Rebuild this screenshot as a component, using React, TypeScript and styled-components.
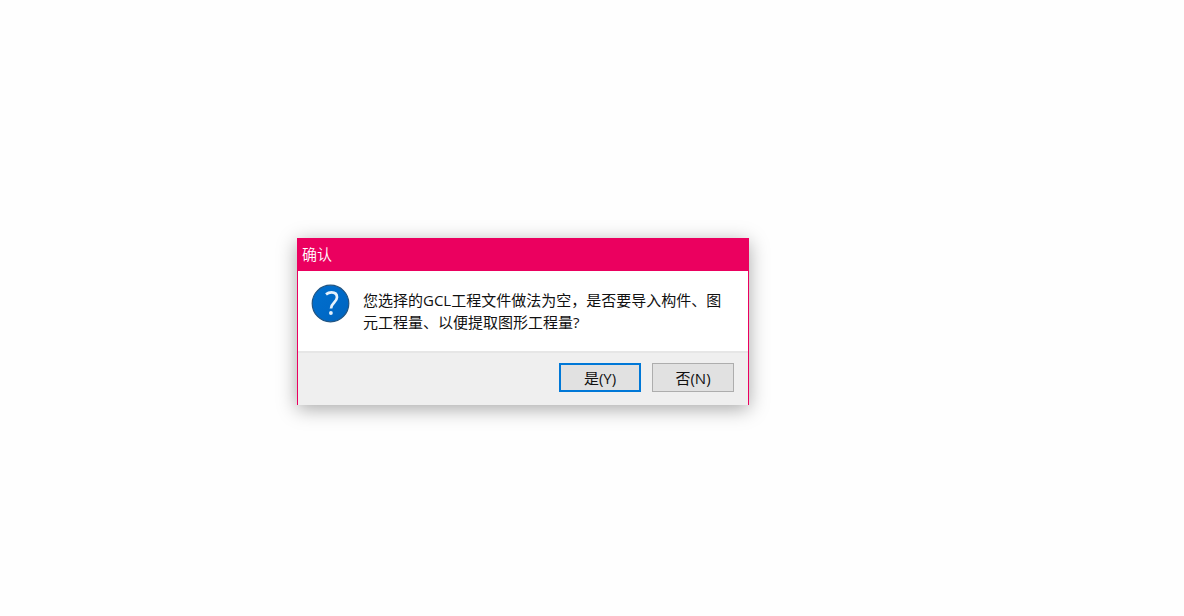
import React from "react";
import styled, { createGlobalStyle } from "styled-components";

const GlobalStyle = createGlobalStyle`
  * { box-sizing: border-box; }
  body {
    margin: 0;
    background: #fefefe;
    font-family: "Open Sans", "Noto Sans CJK SC", sans-serif;
  }
`;

const Desktop = styled.main`
  display: flex;
  min-height: 100vh;
  padding: 238px 16px 16px 297px;
`;

const Dialog = styled.section`
  align-self: flex-start;
  width: 100%;
  max-width: 452px;
  border: 1px solid #eb005f;
  border-bottom: 0;
  background: #fff;
  box-shadow: 0 4px 18px rgba(0, 0, 0, 0.34);
`;

const TitleBar = styled.header`
  height: 32px;
  padding: 4px 4px 6px;
  background: #eb005f;
`;

const Title = styled.h1`
  margin: 0;
  color: #fff;
  font-size: 15px;
  font-weight: 350;
  line-height: 22px;
`;

const Body = styled.div`
  display: flex;
  gap: 12px;
  min-height: 80px;
  padding: 12px 20px 12px 13px;
`;

const QuestionIcon = styled.svg`
  flex: none;
  width: 40px;
  height: 40px;
`;

const Message = styled.p`
  flex: 1;
  margin: 6px 0 0;
  color: #111;
  font-size: 15px;
  line-height: 22px;
`;

const Footer = styled.footer`
  display: flex;
  justify-content: flex-end;
  gap: 11px;
  padding: 10px 14px 13px;
  border-top: 2px solid #e6e6e6;
  background: #efefef;
`;

const DialogButton = styled.button<{ $primary?: boolean }>`
  width: 82px;
  height: 29px;
  padding: 0;
  border: ${({ $primary }) => ($primary ? "2px solid #0078d7" : "1px solid #adadad")};
  background: #e1e1e1;
  color: #111;
  font: inherit;
  font-size: 15px;
  line-height: 22px;
`;

export default function App() {
  return (
    <>
      <GlobalStyle />
      <Desktop>
        <Dialog role="dialog" aria-labelledby="dialog-title" aria-describedby="dialog-message">
          <TitleBar>
            <Title id="dialog-title">确认</Title>
          </TitleBar>
          <Body>
            <QuestionIcon viewBox="0 0 40 40" aria-hidden="true">
              <defs>
                <linearGradient id="disc" x1="0" y1="0" x2="1" y2="1">
                  <stop offset="0" stopColor="#0070ce" />
                  <stop offset="0.5" stopColor="#006ac8" />
                  <stop offset="1" stopColor="#0064be" />
                </linearGradient>
              </defs>
              <circle cx="19.5" cy="20.5" r="18.3" fill="url(#disc)" stroke="#235582" strokeWidth="1.2" />
              <path
                d="M15 11.4C16.7 10 18.5 9.4 20.5 9.4C23.9 9.4 26 11.3 26 14.3C26 19.4 20 19.6 20 25.6"
                fill="none"
                stroke="#e6f2fc"
                strokeWidth="2.7"
              />
              <circle cx="19.9" cy="30" r="1.9" fill="#e6f2fc" />
            </QuestionIcon>
            <Message id="dialog-message">
              您选择的GCL工程文件做法为空，是否要导入构件、图元工程量、以便提取图形工程量?
            </Message>
          </Body>
          <Footer>
            <DialogButton type="button" $primary>是(Y)</DialogButton>
            <DialogButton type="button">否(N)</DialogButton>
          </Footer>
        </Dialog>
      </Desktop>
    </>
  );
}
